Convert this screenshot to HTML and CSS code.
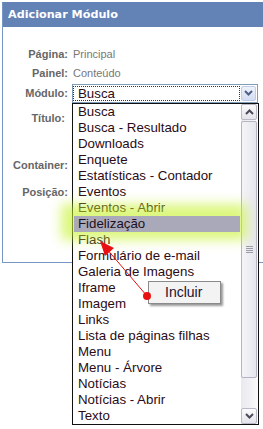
FILE: index.html
```html
<!DOCTYPE html>
<html lang="pt">
<head>
    <meta charset="UTF-8">
    <title>Adicionar Módulo</title>
    <link rel="stylesheet" href="styles.css">
</head>
<body>
    <div class="panel">
        <div class="panel-head">Adicionar Módulo</div>
        <div class="panel-body">
            <div class="form">
                <div class="row">
                    <span class="label">Página:</span>
                    <span class="value">Principal</span>
                </div>
                <div class="row">
                    <span class="label">Painel:</span>
                    <span class="value">Conteúdo</span>
                </div>
                <div class="row row-select">
                    <span class="label">Módulo:</span>
                    <div class="select-wrap">
                        <div class="select">
                            <div class="select-text"><span>Busca</span></div>
                            <div class="select-btn">
                                <svg width="9" height="6" viewBox="0 0 9 6"><path d="M1 1 L4.5 4.5 L8 1" fill="none" stroke="#4d6185" stroke-width="2"/></svg>
                            </div>
                        </div>

                        <!-- opened dropdown list -->
                        <div class="dropdown">
                            <ul class="options">
                                <li>Busca</li>
                                <li>Busca - Resultado</li>
                                <li>Downloads</li>
                                <li>Enquete</li>
                                <li>Estatísticas - Contador</li>
                                <li>Eventos</li>
                                <li>Eventos - Abrir</li>
                                <li class="selected">Fidelização</li>
                                <li>Flash</li>
                                <li>Formulário de e-mail</li>
                                <li>Galeria de Imagens</li>
                                <li>Iframe</li>
                                <li>Imagem</li>
                                <li>Links</li>
                                <li>Lista de páginas filhas</li>
                                <li>Menu</li>
                                <li>Menu - Árvore</li>
                                <li>Notícias</li>
                                <li>Notícias - Abrir</li>
                                <li>Texto</li>
                            </ul>
                            <div class="scrollbar">
                                <div class="sb-btn">
                                    <svg width="9" height="6" viewBox="0 0 9 6"><path d="M1 5 L4.5 1.5 L8 5" fill="none" stroke="#4a4a5a" stroke-width="2"/></svg>
                                </div>
                                <div class="sb-track">
                                    <div class="sb-thumb"><span class="grip"></span></div>
                                </div>
                                <div class="sb-btn">
                                    <svg width="9" height="6" viewBox="0 0 9 6"><path d="M1 1 L4.5 4.5 L8 1" fill="none" stroke="#4a4a5a" stroke-width="2"/></svg>
                                </div>
                            </div>
                        </div>
                    </div>
                </div>
                <div class="row row-title">
                    <span class="label">Título:</span>
                    <span></span>
                </div>
                <div class="row row-container">
                    <span class="label">Container:</span>
                    <span></span>
                </div>
                <div class="row row-pos">
                    <span class="label">Posição:</span>
                    <span></span>
                </div>
            </div>
        </div>
    </div>

    <!-- annotation: callout + arrow -->
    <div class="callout">Incluir</div>
    <svg class="arrow" width="263" height="429" viewBox="0 0 263 429">
        <line x1="147" y1="296" x2="106" y2="248" stroke="#e01010" stroke-width="1"/>
        <polygon points="100,241 114,248 105,256" fill="#e81010"/>
        <circle cx="147" cy="296" r="4" fill="#e81010"/>
    </svg>
</body>
</html>
```

FILE: styles.css
```css
* {
    margin: 0;
    padding: 0;
    box-sizing: border-box;
}

body {
    background-color: #fff;
    font-family: 'Liberation Sans', Arial, sans-serif;
    width: 263px;
    height: 429px;
    overflow: hidden;
    position: relative;
}

/* Panel */
.panel {
    margin: 2px 0 0 2px;
    border: 1px solid #7896c4;
    border-top-color: #6383b6;
    border-right: none;
}

.panel-head {
    height: 24px;
    line-height: 24px;
    padding-left: 5px;
    background-color: #6383b6;
    color: #fff;
    font-family: 'DejaVu Sans', Verdana, sans-serif;
    font-weight: bold;
    font-size: 11.2px;
}

.panel-body {
    height: 235px;
    padding-top: 17px;
}

/* Form rows */
.row {
    display: grid;
    grid-template-columns: 65px 1fr;
    column-gap: 4px;
    align-items: center;
    height: 19px;
    font-size: 11px;
}

.label {
    text-align: right;
    color: #666;
    font-weight: bold;
}

.value {
    color: #777;
    padding-left: 1px;
}

.row-select {
    height: 22px;
}

.row-title {
    height: 48px;
    align-items: start;
}

.row-title .label {
    margin-top: 8px;
    margin-right: 3px;
}

.row-container {
    height: 26px;
}

.row-pos {
    height: 28px;
}

/* Closed select */
.select-wrap {
    position: relative;
    width: 186px;
}

.select {
    display: flex;
    height: 19px;
    border: 1px solid #7f9db9;
    background: #fff;
    padding: 1px 1px 1px 0;
    gap: 1px;
}

.select-text {
    flex: 1;
    border: 1px dotted #333;
    font-size: 13.3px;
    line-height: 14px;
    padding-left: 4px;
    color: #2b0b15;
    overflow: hidden;
}

.select-btn {
    width: 15px;
    display: flex;
    align-items: center;
    justify-content: center;
    background: linear-gradient(#eef2fb, #d3ddf2);
    border: 1px solid #c0cce6;
    border-radius: 2px;
}

/* Opened list */
.dropdown {
    position: absolute;
    top: 19px;
    left: 0;
    width: 187px;
    height: 322px;
    border: 1px solid #111;
    background: #fff;
    display: flex;
    z-index: 5;
}

.options {
    list-style: none;
    flex: 1;
    position: relative;
    z-index: 2;
}

.options li {
    height: 16px;
    line-height: 16px;
    margin: 0 1px;
    padding-left: 4px;
    font-size: 13.3px;
    color: #2b0b15;
    white-space: nowrap;
}

.options li.selected {
    position: relative;
    background-color: #a9a9ba;
    color: #1e1020;
    box-shadow: -3px -2px 12px 10px rgba(196, 242, 40, 0.6);
}

.scrollbar {
    width: 17px;
    display: flex;
    flex-direction: column;
    background: linear-gradient(to right, #e8e8ee, #fafafc);
    padding: 0 1px 0 0;
}

.sb-btn {
    height: 16px;
    display: flex;
    align-items: center;
    justify-content: center;
    background: linear-gradient(#fbfbfd, #e3e3ea);
    border: 1px solid #b9b9c8;
    border-radius: 2px;
}

.sb-track {
    flex: 1;
    padding: 1px 0;
}

.sb-thumb {
    height: 257px;
    display: flex;
    align-items: center;
    justify-content: center;
    background: linear-gradient(to right, #f4f4f8, #e6e6ee);
    border: 1px solid #b3b3c2;
    border-radius: 2px;
}

.grip {
    width: 7px;
    height: 7px;
    background: repeating-linear-gradient(#9a9aa8 0 1px, transparent 1px 2px);
}

/* Annotation */
.callout {
    position: absolute;
    left: 148px;
    top: 281px;
    width: 73px;
    height: 23px;
    line-height: 21px;
    padding-left: 16px;
    background-color: #f3f3f3;
    border: 1px solid #8a8a8a;
    box-shadow: 2px 2px 2px #9a9a9a;
    font-size: 14px;
    color: #1c1030;
    z-index: 8;
}

.arrow {
    position: absolute;
    top: 0;
    left: 0;
    z-index: 9;
    pointer-events: none;
}
```
